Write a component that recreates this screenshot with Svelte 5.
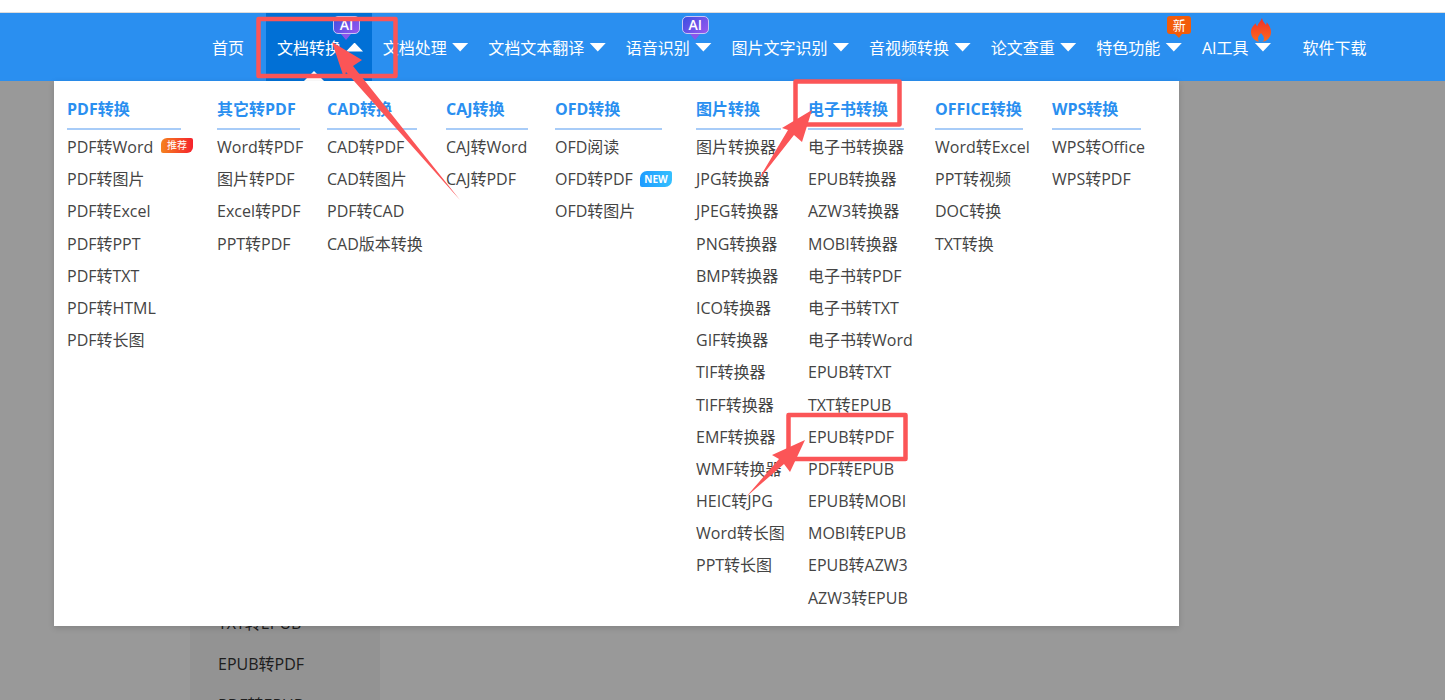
<script>
  const navItems = [
    { label: '首页', first: true },
    { label: '文档转换', caret: true, active: true, badge: 'ai' },
    { label: '文档处理', caret: true },
    { label: '文档文本翻译', caret: true },
    { label: '语音识别', caret: true, badge: 'ai' },
    { label: '图片文字识别', caret: true },
    { label: '音视频转换', caret: true },
    { label: '论文查重', caret: true },
    { label: '特色功能', caret: true, badge: 'new' },
    { label: 'AI工具', caret: true, badge: 'fire' },
    { label: '软件下载', last: true }
  ];

  const columns = [
    { title: 'PDF转换', line: 114, links: ['PDF转Word', 'PDF转图片', 'PDF转Excel', 'PDF转PPT', 'PDF转TXT', 'PDF转HTML', 'PDF转长图'] },
    { title: '其它转PDF', line: 83, links: ['Word转PDF', '图片转PDF', 'Excel转PDF', 'PPT转PDF'] },
    { title: 'CAD转换', line: 90, links: ['CAD转PDF', 'CAD转图片', 'PDF转CAD', 'CAD版本转换'] },
    { title: 'CAJ转换', line: 82, links: ['CAJ转Word', 'CAJ转PDF'] },
    { title: 'OFD转换', line: 107, links: ['OFD阅读', 'OFD转PDF', 'OFD转图片'] },
    { title: '图片转换', line: 85, links: ['图片转换器', 'JPG转换器', 'JPEG转换器', 'PNG转换器', 'BMP转换器', 'ICO转换器', 'GIF转换器', 'TIF转换器', 'TIFF转换器', 'EMF转换器', 'WMF转换器', 'HEIC转JPG', 'Word转长图', 'PPT转长图'] },
    { title: '电子书转换', line: 96, links: ['电子书转换器', 'EPUB转换器', 'AZW3转换器', 'MOBI转换器', '电子书转PDF', '电子书转TXT', '电子书转Word', 'EPUB转TXT', 'TXT转EPUB', 'EPUB转PDF', 'PDF转EPUB', 'EPUB转MOBI', 'MOBI转EPUB', 'EPUB转AZW3', 'AZW3转EPUB'] },
    { title: 'OFFICE转换', line: 88, links: ['Word转Excel', 'PPT转视频', 'DOC转换', 'TXT转换'] },
    { title: 'WPS转换', line: 89, links: ['WPS转Office', 'WPS转PDF'] }
  ];

  const sideLinks = ['TXT转EPUB', 'EPUB转PDF', 'PDF转EPUB'];
</script>

<div class="page">
  <div class="top"></div>

  <nav class="nav">
    {#each navItems as item}
      <a class="item" class:active={item.active} class:first={item.first} class:last={item.last} href="#top">
        {item.label}
        {#if item.caret}<i class="caret" class:up={item.active} class:hot-caret={item.badge === 'fire'}></i>{/if}
        {#if item.badge === 'ai'}<span class="ai">AI</span>{/if}
        {#if item.badge === 'new'}<span class="xin">新</span>{/if}
        {#if item.badge === 'fire'}
          <svg class="fire" viewBox="0 0 20 24" width="20" height="24">
            <defs>
              <linearGradient id="flame" x1="0" y1="0" x2="0" y2="1">
                <stop offset="0" stop-color="#f0302a" />
                <stop offset="1" stop-color="#ff6a1c" />
              </linearGradient>
            </defs>
            <path fill="url(#flame)" fill-rule="evenodd" d="M11 0c.6 3.600 2.400 5 4 7 .5-.9.7-1.700.7-2.800C18.500 7 20 10.500 20 14c0 5.500-4.300 10-10 10S0 19.500 0 14c0-4 2.500-6.300 4.500-8.700.4 1.300.9 2.200 1.800 3C7 5.500 9.500 3.500 11 0zM10 15c-1.500 2-3 3.500-3 5.500 0 1.300.6 2.500 1 3.500h4c.4-1 1-2.200 1-3.500 0-2-1.500-3.500-3-5.500z" />
          </svg>
        {/if}
      </a>
    {/each}
  </nav>

  <main class="main">
    <ul class="side">
      {#each sideLinks as link}
        <li>{link}</li>
      {/each}
    </ul>
    <div class="scrim"></div>

    <section class="menu">
      {#each columns as col}
        <div class="col">
          <h3 style:width="{col.line}px">{col.title}</h3>
          <ul>
            {#each col.links as link}
              <li>
                {link}
                {#if link === 'PDF转Word'}<span class="tag hot">推荐</span>{/if}
                {#if col.title === 'OFD转换' && link === 'OFD转PDF'}<span class="tag fresh">NEW</span>{/if}
              </li>
            {/each}
          </ul>
        </div>
      {/each}
    </section>
  </main>

  <svg class="marks" viewBox="0 0 1445 700" width="1445" height="700">
    <g fill="none" stroke="#fb5557" stroke-width="4.500" stroke-linejoin="round">
      <rect x="258.500" y="19" width="137" height="57" />
      <rect x="795.500" y="81.500" width="104" height="43" />
      <rect x="788.500" y="415" width="117" height="44" />
    </g>
    <g fill="#fb5557">
      <polygon points="332,42 362,60 353,66 460,200 346,72 344,78" />
      <polygon points="812,110 802,142 794,135 757,182 788,130 782,128" />
      <polygon points="805,440 790,472 784,464 746,497 779,459 772,455" />
    </g>
  </svg>
</div>

<style>
  :global(body) {
    margin: 0;
    font-family: "Open Sans", "Noto Sans CJK SC", sans-serif;
  }
  .page {
    position: relative;
    height: 700px;
    overflow: hidden;
    background: #fff;
    display: flex;
    flex-direction: column;
  }
  .top {
    height: 12px;
    border-bottom: 1px solid #dcdcdc;
    flex: none;
  }
  .nav {
    display: flex;
    height: 68px;
    flex: none;
    padding-left: 201px;
    background: #2a8ff0;
  }
  .item {
    position: relative;
    display: flex;
    align-items: center;
    height: 68px;
    padding: 0 8.600px 0 11px;
    box-sizing: border-box;
    color: #fff;
    font-size: 16px;
    text-decoration: none;
    white-space: nowrap;
  }
  .item.first {
    padding-right: 22px;
  }
  .item.last {
    padding-left: 22.400px;
  }
  .active {
    background: #0170d6;
  }
  .active::after {
    content: "";
    position: absolute;
    left: 38px;
    bottom: 0;
    border: 10px solid transparent;
    border-top: 0;
    border-bottom-color: #fff;
  }
  .caret {
    width: 17px;
    height: 9px;
    margin-left: 5px;
    background: #fff;
    clip-path: polygon(0 0, 100% 0, 50% 100%);
  }
  .caret.up {
    clip-path: polygon(50% 0, 100% 100%, 0 100%);
  }
  .caret.hot-caret {
    margin-left: 6px;
  }
  .ai {
    position: absolute;
    left: 67px;
    top: 3px;
    width: 25px;
    height: 16px;
    border: 1px solid #c9c6f5;
    border-radius: 5px;
    background: linear-gradient(135deg, #3a4fe2, #9a57ee);
    color: #fff;
    font-size: 14px;
    font-weight: 600;
    line-height: 16px;
    text-align: center;
  }
  .ai::after {
    content: "";
    position: absolute;
    left: 7px;
    top: 17px;
    border-left: 5px solid transparent;
    border-right: 5px solid transparent;
    border-top: 6px solid #8a55ea;
  }
  .xin {
    position: absolute;
    left: 82px;
    top: 3px;
    width: 24px;
    height: 18px;
    border-radius: 3px;
    background: #f25c0a;
    color: #fff;
    font-size: 13px;
    line-height: 18px;
    text-align: center;
  }
  .xin::after {
    content: "";
    position: absolute;
    left: 8px;
    top: 18px;
    border-left: 4px solid transparent;
    border-right: 3px solid transparent;
    border-top: 4px solid #f25c0a;
  }
  .fire {
    position: absolute;
    left: 60px;
    top: 5px;
  }
  .main {
    position: relative;
    flex: 1;
  }
  .side {
    list-style: none;
    margin: 0 0 0 190px;
    width: 162px;
    height: 100%;
    padding: 522px 0 0 28px;
    background: #f5f5f5;
    color: #333;
    font-size: 16px;
  }
  .side li {
    height: 41px;
    line-height: 41px;
  }
  .scrim {
    position: absolute;
    inset: 0;
    background: rgba(0, 0, 0, 0.4);
  }
  .menu {
    position: absolute;
    left: 54px;
    top: 0;
    width: 1112px;
    height: 545px;
    padding-left: 13px;
    display: grid;
    grid-template-columns: 150px 110px 119px 109px 141px 112px 127px 117px 1fr;
    background: #fff;
    box-shadow: 0 2px 6px rgba(0, 0, 0, 0.15);
  }
  h3 {
    margin: 0;
    height: 47px;
    line-height: 56px;
    box-sizing: content-box;
    border-bottom: 2px solid #a8ccf8;
    color: #2a8ff0;
    font-size: 16px;
    font-weight: 700;
    white-space: nowrap;
  }
  .col ul {
    list-style: none;
    margin: 0;
    padding: 0;
  }
  .col li {
    position: relative;
    height: 32.200px;
    line-height: 34px;
    color: #444;
    font-size: 16px;
    white-space: nowrap;
  }
  .tag {
    position: absolute;
    top: 9px;
    height: 15px;
    width: 32px;
    color: #fff;
    font-size: 10px;
    line-height: 15px;
    text-align: center;
  }
  .hot {
    left: 94px;
    top: 8px;
    background: linear-gradient(90deg, #f5821f, #f5222d);
    border-radius: 6px 2px 6px 2px;
  }
  .fresh {
    left: 85px;
    height: 16px;
    line-height: 16px;
    font-weight: 700;
    background: linear-gradient(90deg, #1e9bff, #35c0ff);
    border-radius: 7px 2px 7px 2px;
  }
  .marks {
    position: absolute;
    left: 0;
    top: 0;
    pointer-events: none;
  }
</style>
